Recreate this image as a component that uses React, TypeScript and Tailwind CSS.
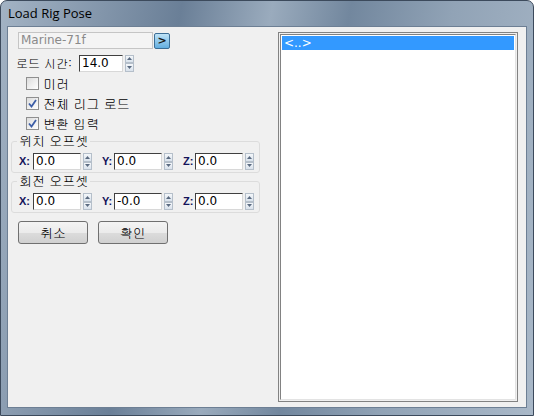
import React from 'react';

const kr = "font-['Gulim','Noto_Sans_CJK_KR','DejaVu_Sans',sans-serif]";
const ui = "font-['DejaVu_Sans','Liberation_Sans',sans-serif]";

const Spin: React.FC = () => (
  <div className="ml-[2px] flex h-[17px] w-[9px] flex-col">
    {[0, 1].map((i) => (
      <div
        key={i}
        className="flex flex-1 items-center justify-center border border-[#b5bfca] bg-[linear-gradient(#f4f7fa,#d9e2ec)]"
      >
        <svg width="5" height="3" viewBox="0 0 5 3">
          <path d={i === 0 ? 'M0 3 L2.5 0 L5 3 Z' : 'M0 0 L2.5 3 L5 0 Z'} fill="#5a6a80" />
        </svg>
      </div>
    ))}
  </div>
);

const NumField: React.FC<{ value: string; width: string }> = ({ value, width }) => (
  <div className="flex items-center">
    <div
      className={`${width} h-[17px] border border-t-[#404040] border-l-[#404040] border-r-[#d8d8d8] border-b-[#d8d8d8] bg-white pl-[2px] text-[12px] leading-[15px] text-black ${ui}`}
    >
      {value}
    </div>
    <Spin />
  </div>
);

const Check: React.FC<{ checked: boolean; label: string }> = ({ checked, label }) => (
  <div className="flex h-[20px] items-center pl-[8px]">
    <div className="flex h-[13px] w-[13px] items-center justify-center border border-[#8f8f8f] bg-[linear-gradient(135deg,#dcdcdc,#ffffff)]">
      {checked && (
        <svg width="9" height="9" viewBox="0 0 9 9">
          <path d="M1 4.5 L3.5 7.5 L8 1" fill="none" stroke="#3d5ea6" strokeWidth="1.8" />
        </svg>
      )}
    </div>
    <span className={`ml-[4px] text-[13px] leading-none text-black ${kr}`}>{label}</span>
  </div>
);

const XYZ: React.FC<{ y: string }> = ({ y }) => (
  <div className="flex items-center text-[11px] text-[#14145a] font-['Liberation_Sans',sans-serif]">
    <span className="w-[14px] font-bold">X:</span>
    <NumField value="0.0" width="w-[48px]" />
    <span className="ml-[10px] w-[12px] font-bold">Y:</span>
    <NumField value={y} width="w-[48px]" />
    <span className="ml-[10px] w-[12px] font-bold">Z:</span>
    <NumField value="0.0" width="w-[48px]" />
  </div>
);

const Group: React.FC<{ title: string; y: string }> = ({ title, y }) => (
  <div className="relative ml-[-7px] mt-[8px] w-[249px] rounded-[3px] border border-[#dcdcdc] pb-[2px] pl-[7px] pt-[11px]">
    <span className={`absolute -top-[9px] left-[5px] bg-[#f0f0f0] px-[2px] text-[13px] leading-[16px] text-black ${kr}`}>
      {title}
    </span>
    <XYZ y={y} />
  </div>
);

const Btn: React.FC<{ label: string }> = ({ label }) => (
  <div
    className={`flex h-[23px] w-[70px] items-center justify-center rounded-[3px] border border-[#707070] bg-[linear-gradient(#f4f4f4,#ebebeb_50%,#dcdcdc_51%,#d0d0d0)] text-[13px] text-black ${kr}`}
  >
    {label}
  </div>
);

export default function App() {
  return (
    <div className="flex h-[416px] w-[534px] flex-col overflow-hidden rounded-t-[7px] border border-[#3c4a5c] bg-[linear-gradient(100deg,#a3b3c4_0%,#8c9eb2_12%,#6a7f97_30%,#9aabbd_45%,#72879e_58%,#91a3b6_75%,#a9b8c8_100%)]">
      <div className="flex h-[25px] shrink-0 items-center pl-[7px] pt-[1px]">
        <span className="text-[13px] text-black font-['Open_Sans','DejaVu_Sans',sans-serif]">Load Rig Pose</span>
      </div>
      <div className="mx-[6px] mb-[7px] flex flex-1 border border-[#6d7f94] bg-[#f0f0f0]">
        <div className="flex w-[262px] shrink-0 flex-col pl-[10px] pt-[5px]">
          <div className="flex items-center">
            <div className={`h-[17px] w-[135px] border border-[#c5c5c5] bg-[#f4f4f4] pl-[2px] text-[12px] leading-[15px] text-[#8a8a8a] ${ui}`}>
              Marine-71f
            </div>
            <div className="ml-[1px] flex h-[16px] w-[16px] items-center justify-center rounded-[2px] border border-[#3c6e96] bg-[linear-gradient(#bfe3f7,#62aee0)]">
              <span className={`text-[11px] font-bold leading-none text-[#1a1a1a] ${ui}`}>&gt;</span>
            </div>
          </div>
          <div className="mt-[5px] flex items-center">
            <span className={`ml-[-2px] w-[63px] text-[12px] text-black ${kr}`}>로드 시간:</span>
            <NumField value="14.0" width="w-[44px]" />
          </div>
          <div className="mt-[1px] flex flex-col">
            <Check checked={false} label="미러" />
            <Check checked={true} label="전체 리그 로드" />
            <Check checked={true} label="변환 입력" />
          </div>
          <Group title="위치 오프셋" y="0.0" />
          <Group title="회전 오프셋" y="-0.0" />
          <div className="mt-[8px] flex gap-[10px]">
            <Btn label="취소" />
            <Btn label="확인" />
          </div>
        </div>
        <div className="mb-[5px] ml-[8px] mt-[5px] w-[240px] border border-[#828282] bg-[#f0f0f0] p-px">
          <div className="h-full border border-[#828282] border-b-[#e3e3e3] border-r-[#e3e3e3] bg-white p-px">
            <div className={`h-[14px] bg-[#3399ff] pl-[2px] text-[12px] leading-[14px] text-white ${ui}`}>&lt;..&gt;</div>
          </div>
        </div>
      </div>
    </div>
  );
}
